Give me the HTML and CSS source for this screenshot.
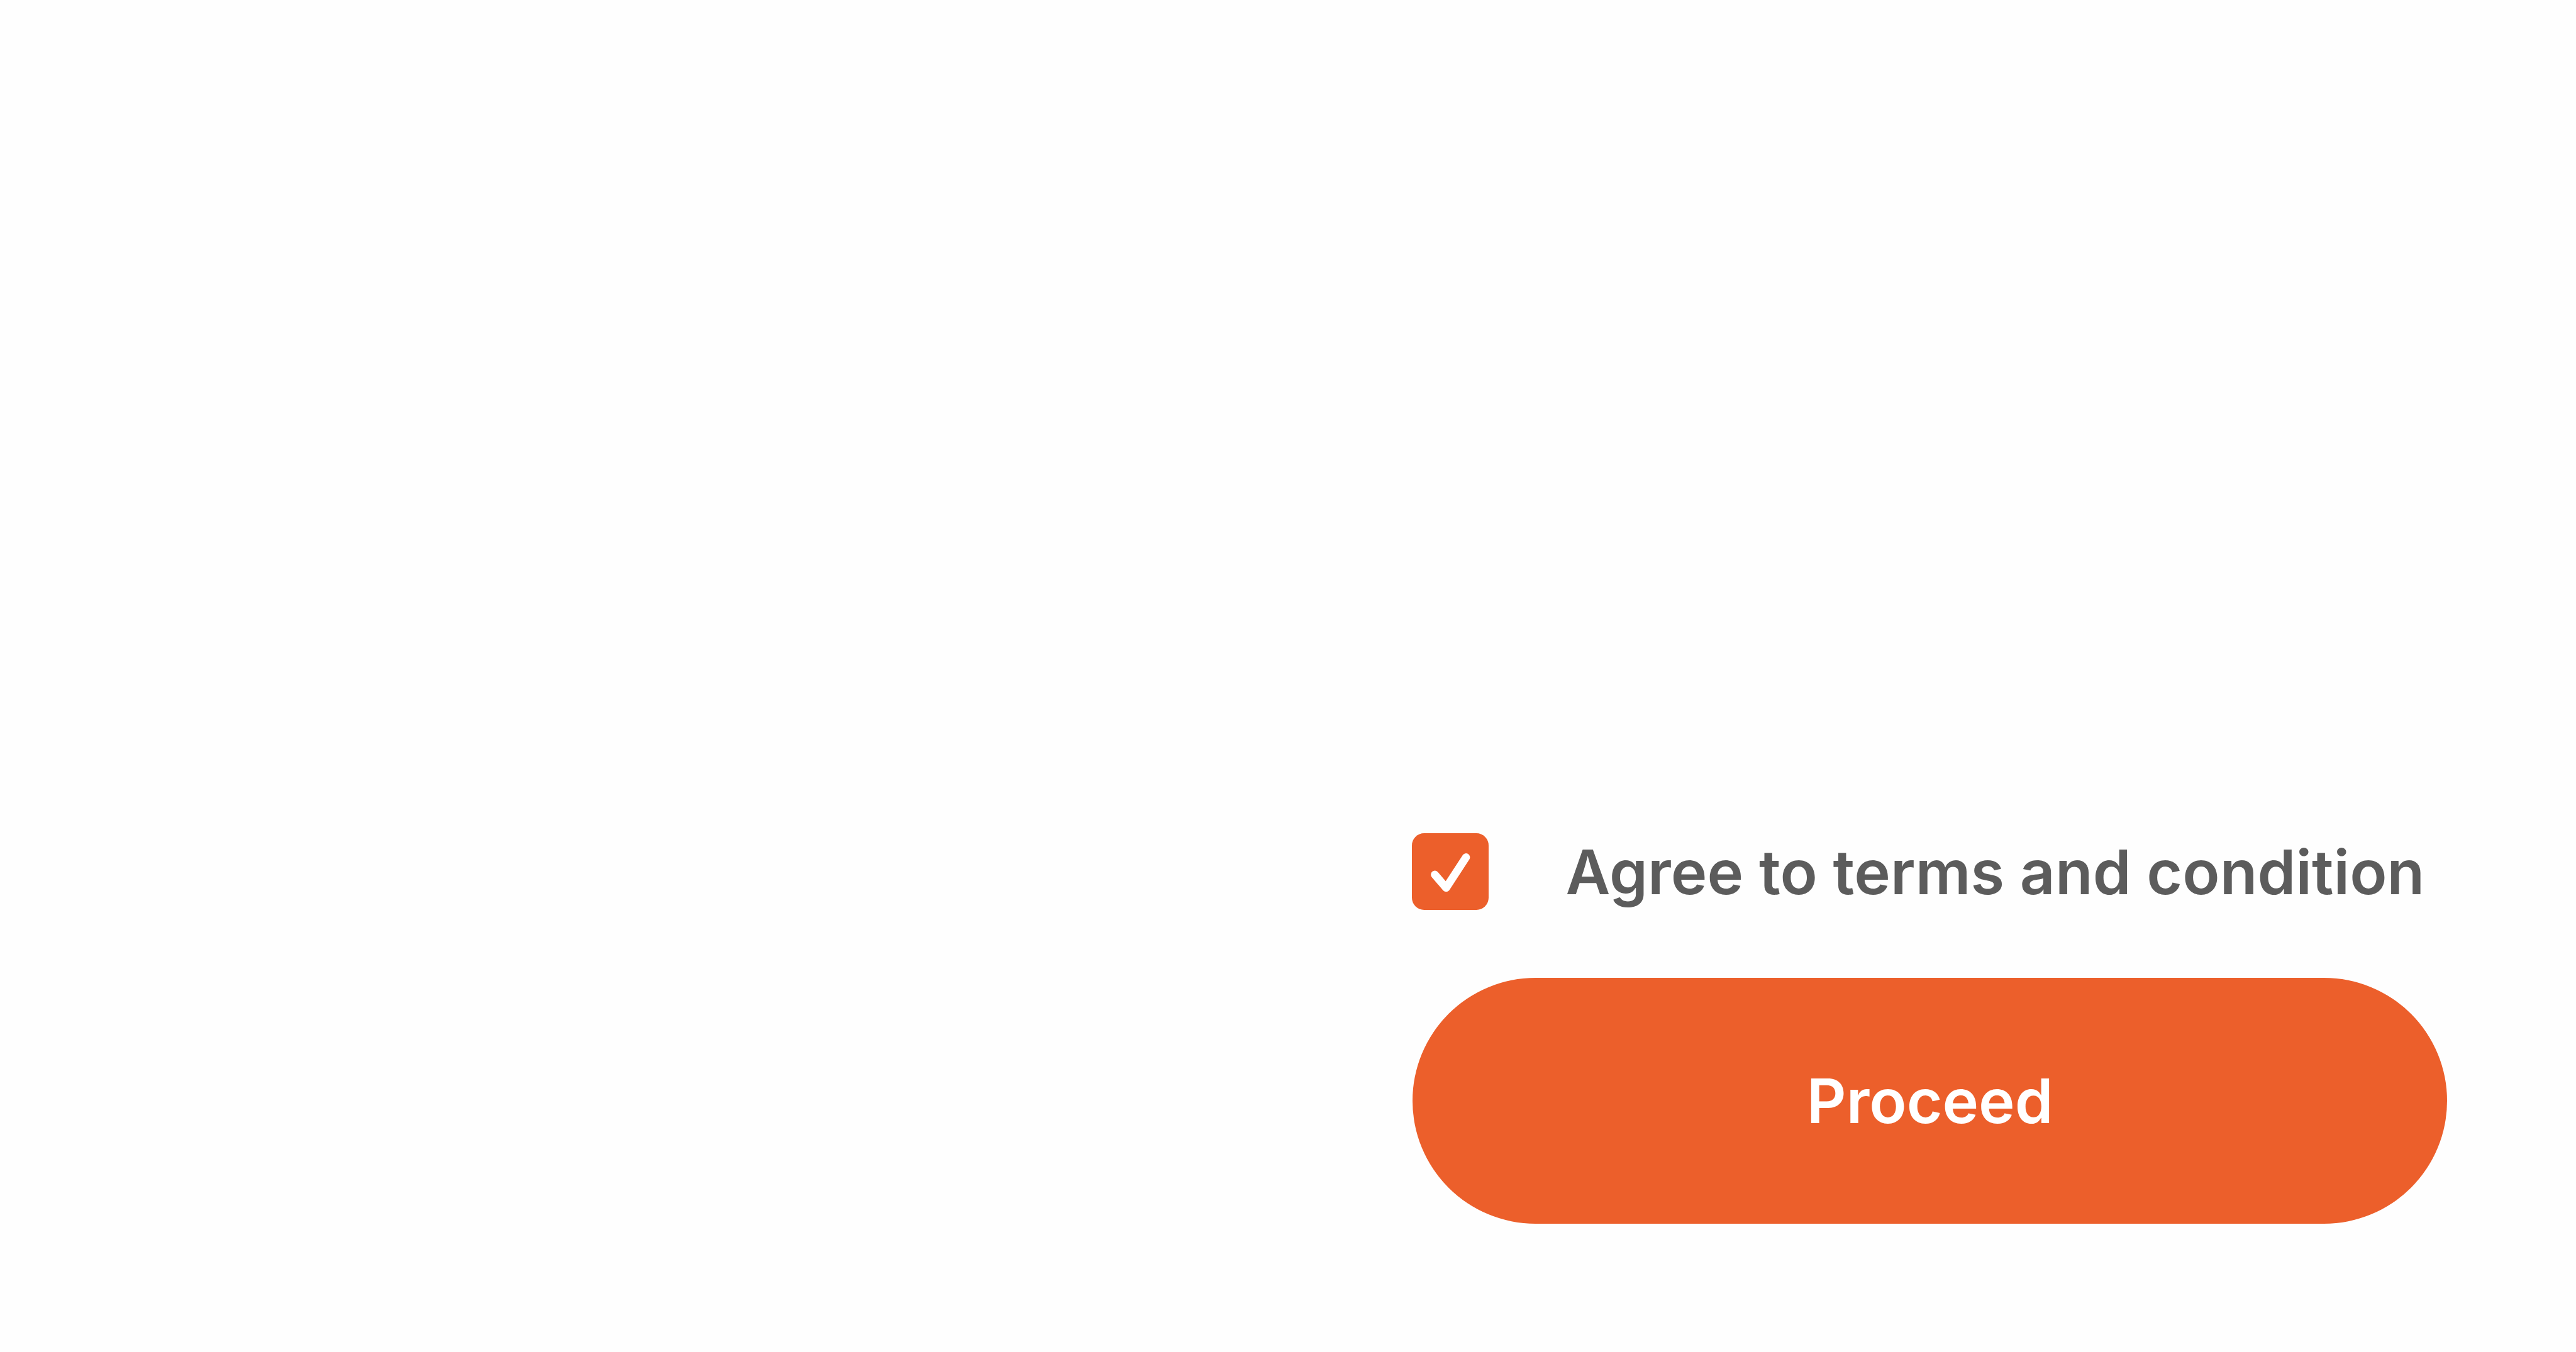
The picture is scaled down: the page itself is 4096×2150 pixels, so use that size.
FILE: index.html
```
<!DOCTYPE html>
<html lang="en">
<head>
  <meta charset="UTF-8">
  <meta name="viewport" content="width=device-width, initial-scale=1.0">
  <title>Terms and condition</title>
  <link rel="stylesheet" href="styles.css">
</head>
<body>
  <form class="terms-form" id="terms-form">
    <label class="terms-label">
      <input type="checkbox" class="terms-input" name="agree" checked>
      <svg class="checkbox" viewBox="0 0 20 20">
        <path d="M5.98 10.8L8.93 14.23L14.1 6.29" />
      </svg>
      <span class="terms-text">Agree to terms and condition</span>
    </label>
    <button type="submit" class="proceed-btn">Proceed</button>
  </form>
</body>
</html>
```
FILE: styles.css
```
body {
  font-family: Inter, sans-serif;
  font-size: 97.5px;
  font-weight: 600;
  font-optical-sizing: none;
  background-color: #fefefe;
  margin: 0;
  height: 2150px;
  display: flex;
  justify-content: flex-end;
  align-items: flex-end;
  overflow: hidden;
}
.terms-form {
  width: 1644.6px;
  margin-right: 205px;
  margin-bottom: 204px;
}
.terms-label {
  display: flex;
  align-items: center;
  height: 122px;
  margin-left: -1px;
  margin-bottom: 108px;
  color: #5c5c5c;
  cursor: pointer;
}
.terms-input {
  display: none;
}
.checkbox {
  width: 122px;
  height: 122px;
  flex-shrink: 0;
  margin-right: 122px;
  border-radius: 19.5px;
  background-color: #ec5f2b;
}
.checkbox path {
  fill: none;
  stroke: #fff;
  stroke-width: 2.07;
  stroke-linecap: round;
  stroke-linejoin: round;
}
.terms-text {
  line-height: 122px;
  padding-top: 2px;
  letter-spacing: 0.1px;
  white-space: nowrap;
}
.proceed-btn {
  display: block;
  width: 100%;
  height: 391px;
  padding: 0;
  border: none;
  border-radius: 195.5px;
  background-color: #ec5f2b;
  color: #fff;
  font: inherit;
  cursor: pointer;
}
```
